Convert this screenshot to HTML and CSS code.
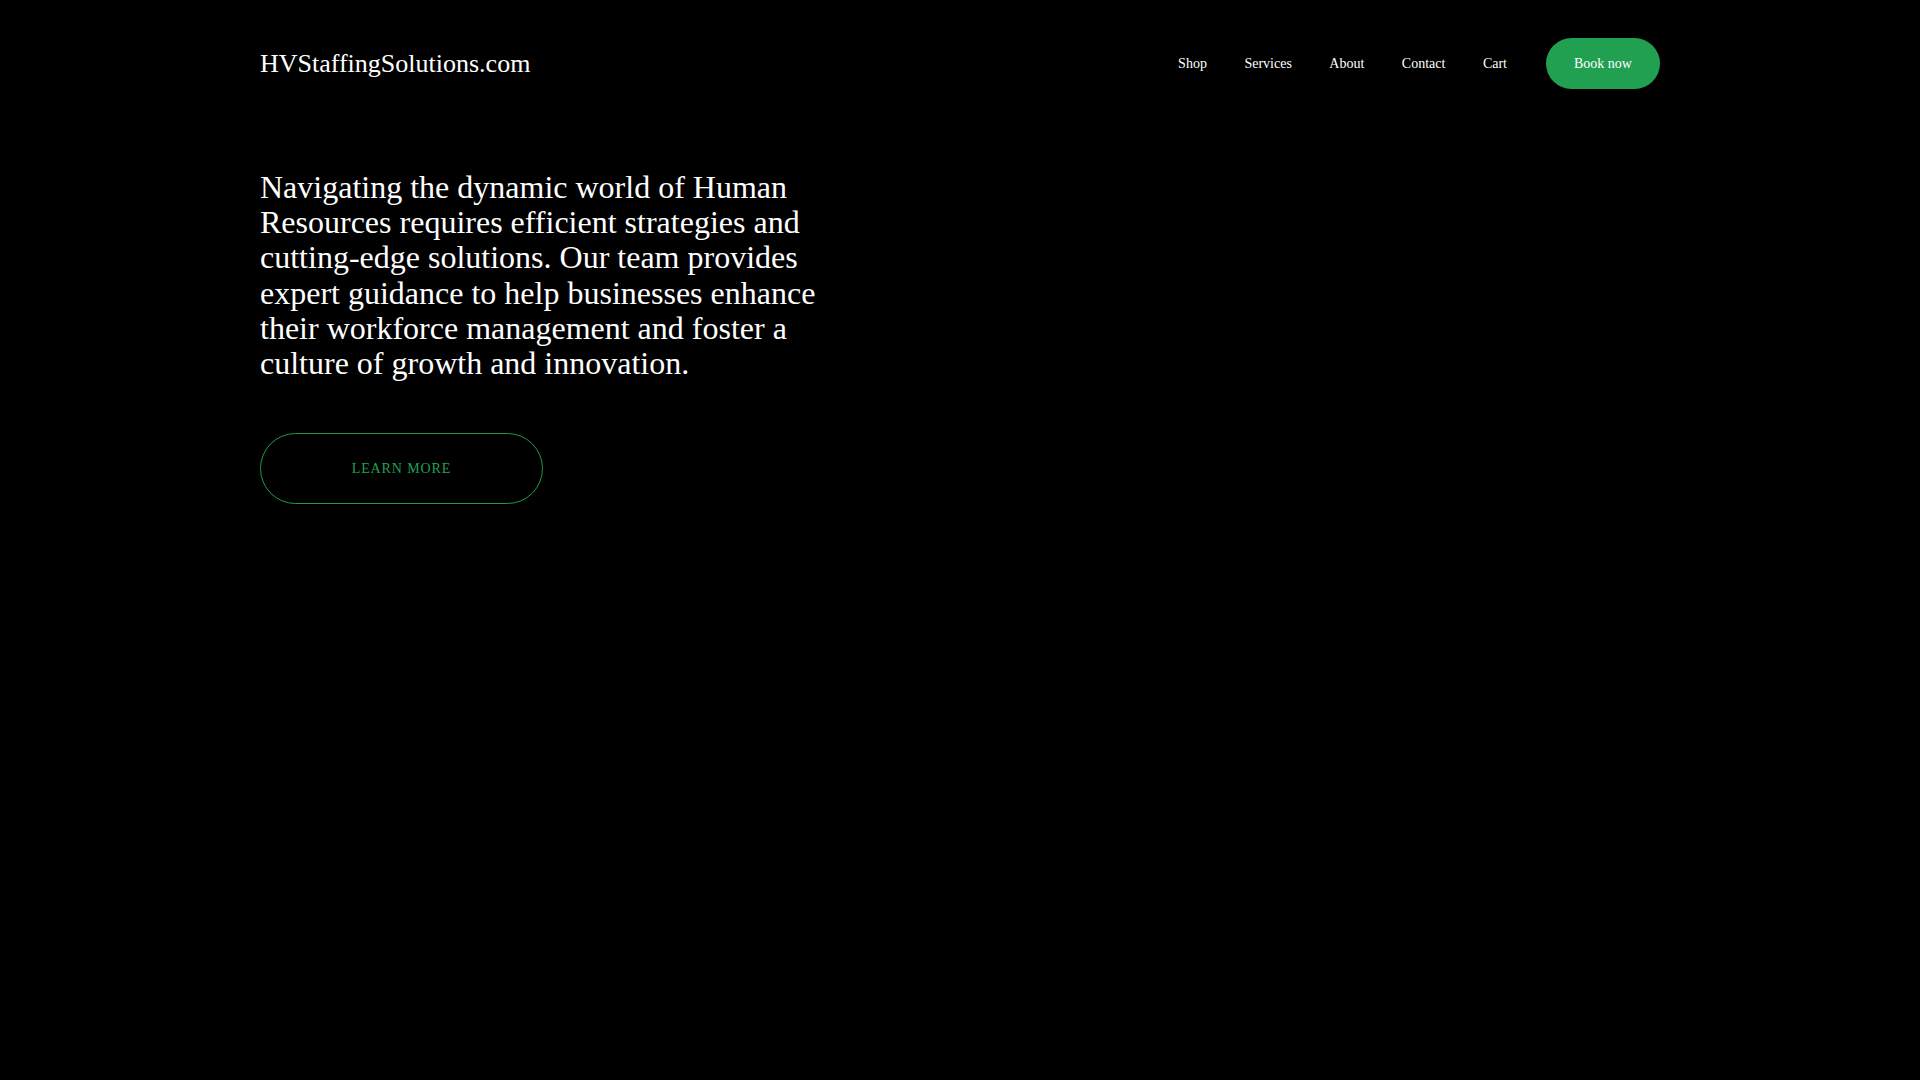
FILE: index.html
```html
<!DOCTYPE html>
<html lang="en">
<head>
<meta charset="utf-8">
<title>HVStaffingSolutions.com</title>
<link rel="stylesheet" href="styles.css">
</head>
<body>
<div class="page">
  <header class="header">
    <div class="logo">HVStaffingSolutions.com</div>
    <nav class="nav">
      <a href="#">Shop</a>
      <a href="#">Services</a>
      <a href="#">About</a>
      <a href="#">Contact</a>
      <a href="#">Cart</a>
      <a href="#" class="book">Book now</a>
    </nav>
  </header>
  <main class="hero">
    <p class="lead">Navigating the dynamic world of Human Resources requires efficient strategies and cutting-edge solutions. Our team provides expert guidance to help businesses enhance their workforce management and foster a culture of growth and innovation.</p>
    <a href="#" class="learn">LEARN MORE</a>
  </main>
</div>
</body>
</html>
```
FILE: styles.css
```css
html, body {
  margin: 0;
  padding: 0;
  background: #000;
  color: #fff;
  font-family: "Liberation Serif", "Times New Roman", serif;
}
.page {
  width: 1400px;
  margin: 0 auto;
}
.header {
  display: flex;
  align-items: center;
  justify-content: space-between;
  padding-top: 38px;
}
.logo {
  font-size: 26px;
  color: #fff;
}
.nav {
  display: flex;
  align-items: center;
  gap: 37.5px;
}
.nav a {
  color: #fff;
  text-decoration: none;
  font-size: 14px;
}
.nav a.book {
  background: #21a052;
  border-radius: 26px;
  width: 114px;
  height: 51px;
  display: flex;
  align-items: center;
  justify-content: center;
  font-size: 14px;
  margin-left: 1.5px;
}
.hero {
  padding-top: 81px;
}
.lead {
  margin: 0;
  width: 580px;
  font-size: 32px;
  line-height: 1.1;
}
.learn {
  margin-top: 52px;
  display: flex;
  align-items: center;
  justify-content: center;
  width: 281px;
  height: 69px;
  border: 1px solid #1e9a4a;
  border-radius: 36px;
  color: #21a052;
  text-decoration: none;
  font-size: 14px;
  letter-spacing: 0.9px;
}
```
